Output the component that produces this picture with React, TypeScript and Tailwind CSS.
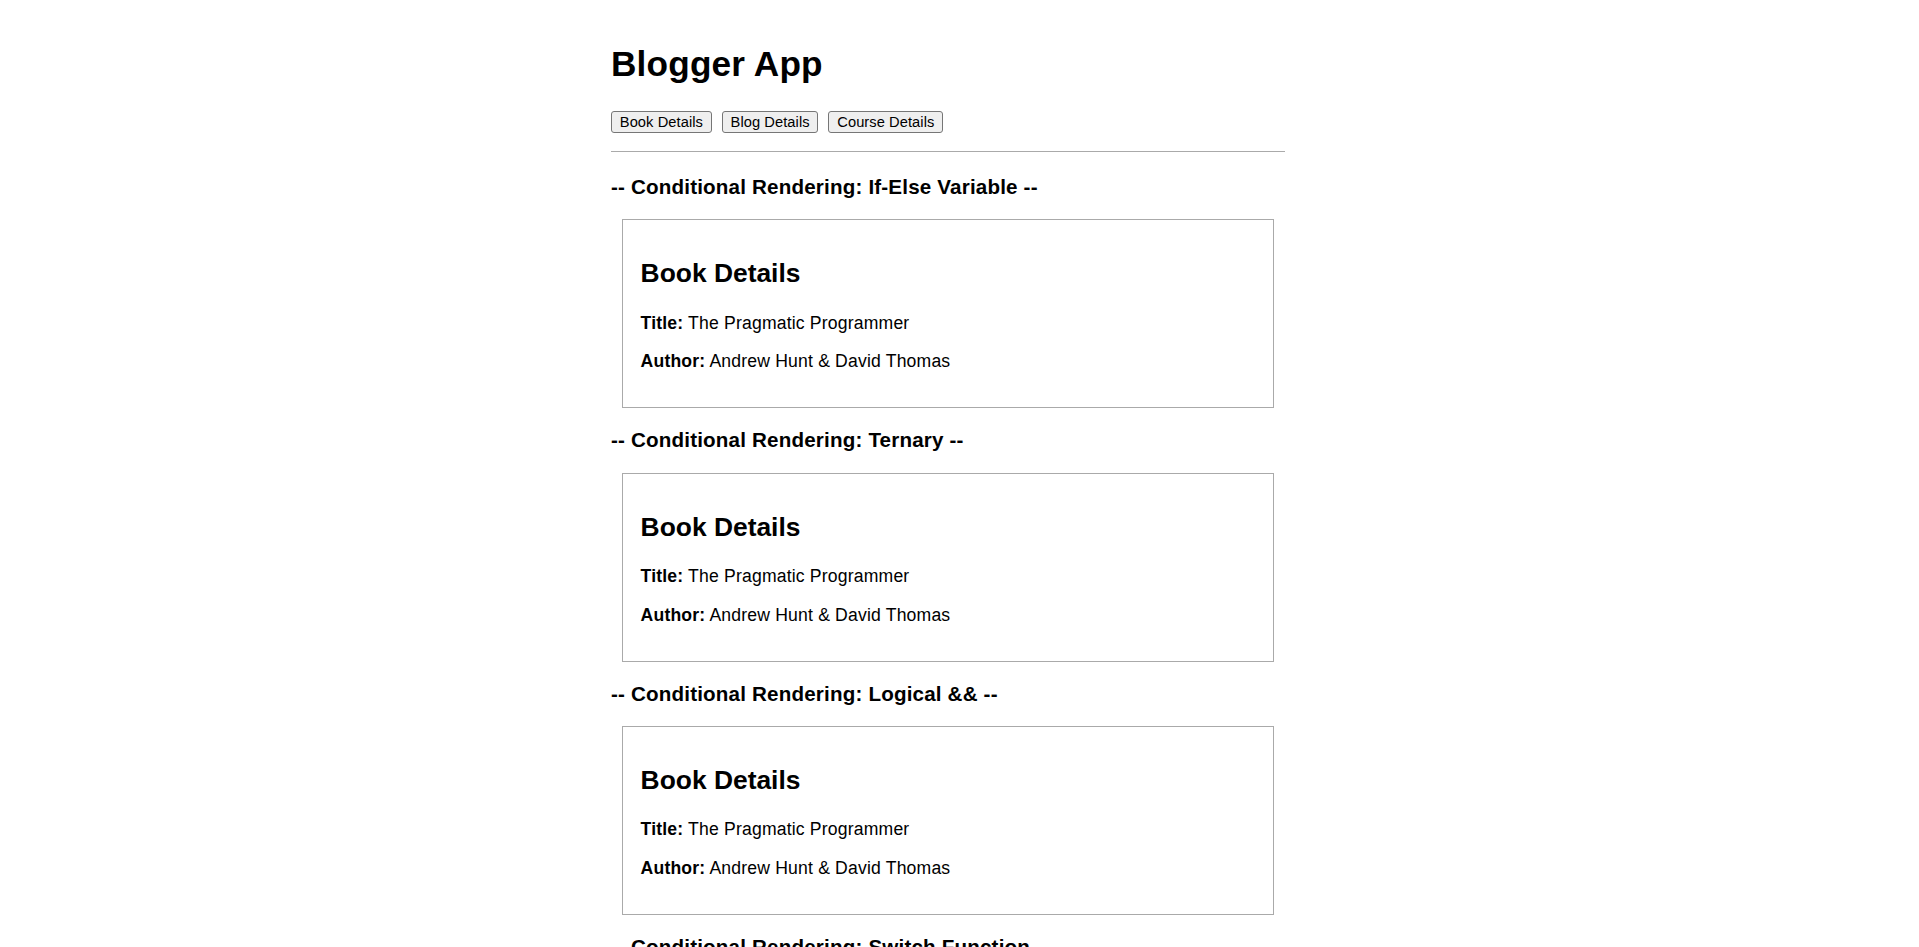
import React from "react";

type Book = {
  title: string;
  author: string;
};

const book: Book = {
  title: "The Pragmatic Programmer",
  author: "Andrew Hunt & David Thomas",
};

const sections = [
  "-- Conditional Rendering: If-Else Variable --",
  "-- Conditional Rendering: Ternary --",
  "-- Conditional Rendering: Logical && --",
  "-- Conditional Rendering: Switch Function --",
];

function BookDetails({ data }: { data: Book }) {
  return (
    <div className="mx-[11px] my-[11px] border border-[#aaaaaa] p-[17.6px]">
      <h2 className="mt-[20.4px] mb-[23.4px] text-[26.4px] font-bold leading-[normal] tracking-normal">Book Details</h2>
      <p className="my-[17.6px]">
        <strong className="font-bold">Title:</strong> {data.title}
      </p>
      <p className="my-[17.6px]">
        <strong className="font-bold">Author:</strong> {data.author}
      </p>
    </div>
  );
}

export default function App() {
  const tabs = ["Book Details", "Blog Details", "Course Details"];

  return (
    <div className="min-h-screen bg-white pr-[17px] font-['Liberation_Sans',Arial,sans-serif] text-[17.6px] leading-[normal] tracking-[0.01em] text-black">
      <div className="mx-auto w-[680px] pt-[21px] pb-[60px]">
        <div className="w-[674px]">
          <h1 className="mt-[23px] mb-[27px] text-[35.2px] font-bold leading-[normal]">Blogger App</h1>

          {/* Tabs */}
          <div className="flex gap-[10px]">
            {tabs.map((t) => (
              <button
                key={t}
                className="h-[22px] rounded-[3px] border border-[#767676] bg-[#efefef] px-[7.8px] text-[14.67px] leading-none tracking-[0.005em] text-black"
              >
                {t}
              </button>
            ))}
          </div>

          <hr className="mt-[18px] mb-0 h-0 border-0 border-t border-[#aaaaaa]" />

          <div className="pt-[3px]">
            {sections.map((s) => (
              <div key={s}>
                <h3 className="my-[20.1px] text-[20.6px] font-bold leading-[normal]">{s}</h3>
                <BookDetails data={book} />
              </div>
            ))}
          </div>
        </div>
      </div>
    </div>
  );
}
